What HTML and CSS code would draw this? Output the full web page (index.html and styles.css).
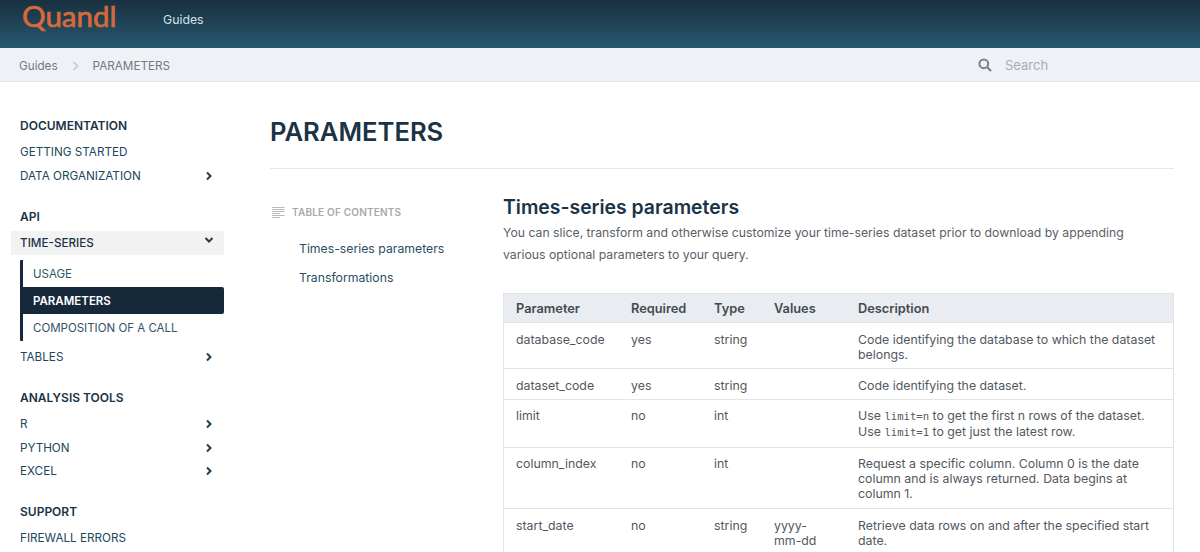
FILE: index.html
```html
<!DOCTYPE html>
<html lang="en">
<head>
<meta charset="utf-8">
<title>Parameters</title>
<link rel="stylesheet" href="styles.css">
</head>
<body>
<header class="topbar">
  <a class="logo">Quandl</a>
  <a class="topnav">Guides</a>
</header>
<div class="crumbs">
  <div class="crumb-list">
    <span>Guides</span>
    <svg class="crumb-sep" width="7" height="10" viewBox="0 0 7 10"><path d="M1.5 1l4 4-4 4" fill="none" stroke="#c4c8cd" stroke-width="1.6"/></svg>
    <span>PARAMETERS</span>
  </div>
  <div class="search">
    <svg width="14" height="14" viewBox="0 0 14 14"><circle cx="5.8" cy="5.8" r="4.4" fill="none" stroke="#7b8083" stroke-width="2"/><path d="M9 9l4 4" stroke="#7b8083" stroke-width="2.2"/></svg>
    <span>Search</span>
  </div>
</div>
<div class="page">
  <nav class="sidebar">
    <section class="nav-group">
      <h4>DOCUMENTATION</h4>
      <a class="nav-row">GETTING STARTED</a>
      <a class="nav-row">DATA ORGANIZATION <svg class="chev" viewBox="0 0 8 10"><path d="M2 1.5L5.5 5 2 8.5" /></svg></a>
    </section>
    <section class="nav-group">
      <h4>API</h4>
      <a class="nav-row open">TIME-SERIES <svg class="chev down" viewBox="0 0 10 8"><path d="M1.5 2L5 5.5 8.5 2" /></svg></a>
      <div class="subnav">
        <a>USAGE</a>
        <a class="active">PARAMETERS</a>
        <a>COMPOSITION OF A CALL</a>
      </div>
      <a class="nav-row">TABLES <svg class="chev" viewBox="0 0 8 10"><path d="M2 1.5L5.5 5 2 8.5" /></svg></a>
    </section>
    <section class="nav-group">
      <h4>ANALYSIS TOOLS</h4>
      <a class="nav-row">R <svg class="chev" viewBox="0 0 8 10"><path d="M2 1.5L5.5 5 2 8.5" /></svg></a>
      <a class="nav-row">PYTHON <svg class="chev" viewBox="0 0 8 10"><path d="M2 1.5L5.5 5 2 8.5" /></svg></a>
      <a class="nav-row">EXCEL <svg class="chev" viewBox="0 0 8 10"><path d="M2 1.5L5.5 5 2 8.5" /></svg></a>
    </section>
    <section class="nav-group">
      <h4>SUPPORT</h4>
      <a class="nav-row">FIREWALL ERRORS</a>
    </section>
  </nav>
  <main class="main">
    <h1>PARAMETERS</h1>
    <div class="columns">
      <aside class="toc">
        <div class="toc-title">
          <svg width="13" height="11" viewBox="0 0 13 11"><path d="M0 .5h12.5M0 2.5h12.5M0 4.5h12.5M0 6.5h8M0 8.5h12.5M0 10.5h8" stroke="#b9bcbf" fill="none"/></svg>
          <span>TABLE OF CONTENTS</span>
        </div>
        <a>Times-series parameters</a>
        <a>Transformations</a>
      </aside>
      <article class="content">
        <h2>Times-series parameters</h2>
        <p>You can slice, transform and otherwise customize your time-series dataset prior to download by appending various optional parameters to your query.</p>
        <table>
          <colgroup><col class="c1"><col class="c2"><col class="c3"><col class="c4"><col class="c5"></colgroup>
          <thead><tr><th>Parameter</th><th>Required</th><th>Type</th><th>Values</th><th>Description</th></tr></thead>
          <tbody>
            <tr><td>database_code</td><td>yes</td><td>string</td><td></td><td>Code identifying the database to which the dataset belongs.</td></tr>
            <tr><td>dataset_code</td><td>yes</td><td>string</td><td></td><td>Code identifying the dataset.</td></tr>
            <tr class="code-row"><td>limit</td><td>no</td><td>int</td><td></td><td>Use <code>limit=n</code> to get the first n rows of the dataset. Use <code>limit=1</code> to get just the latest row.</td></tr>
            <tr><td>column_index</td><td>no</td><td>int</td><td></td><td>Request a specific column. Column 0 is the date column and is always returned. Data begins at column 1.</td></tr>
            <tr><td>start_date</td><td>no</td><td>string</td><td>yyyy-mm-dd</td><td>Retrieve data rows on and after the specified start date.</td></tr>
          </tbody>
        </table>
      </article>
    </div>
  </main>
</div>
</body>
</html>
```
FILE: styles.css
```css
* { box-sizing: border-box; }
html, body { margin: 0; height: 552px; overflow: hidden; }
body { font-family: Inter, "Liberation Sans", sans-serif; color: #1b3345; background: #fff; }

.topbar { height: 48px; display: flex; align-items: center; background: linear-gradient(#18303f, #28586f); }
.logo { width: 163px; padding: 0 0 17px 22px; font-family: Lato, sans-serif; font-size: 29.5px; line-height: 30px; color: #d9683a; -webkit-text-stroke: .7px #d9683a; }
.topnav { padding-bottom: 10px; font-size: 12.3px; color: #d5e0e6; }

.crumbs { height: 34px; padding-top: 1px; display: flex; align-items: center; justify-content: space-between; background: #eef1f6; border-bottom: 1px solid #e3e5e8; font-size: 11.7px; color: #74797f; }
.crumb-list { display: flex; align-items: center; padding: 1px 0 0 19px; }
.crumb-sep { margin: 0 14px 0 14px; }
.search { width: 222px; display: flex; align-items: center; gap: 13px; font-size: 13px; color: #a9adb2; }

.page { display: flex; }
.sidebar { width: 224px; flex: none; padding: 36px 0 0 20px; }
.nav-group { margin-bottom: 21px; }
.nav-group h4 { margin: 0 0 7.5px; font-size: 12px; line-height: 15px; font-weight: 600; color: #1a3345; }
.nav-row { height: 23.5px; display: flex; align-items: center; justify-content: space-between; padding-right: 11px; font-size: 11.7px; color: #21475c; }
.chev { width: 8px; height: 10px; fill: none; stroke: #1f3d52; stroke-width: 2; }
.chev.down { width: 10px; height: 8px; margin: -6px -1px 0 0; }
.nav-row.open { height: 24px; margin: 0 0 0 -9px; padding-left: 9px; background: #f2f2f2; font-weight: 500; color: #1a3345; }
.subnav { margin: 5px 0 0; border-left: 3px solid #16293a; border-radius: 1px; height: 81px; display: flex; flex-direction: column; }
.subnav a { flex: 1; display: flex; align-items: center; padding-left: 10px; font-size: 11.5px; color: #2d5468; }
.subnav a.active { background: #15293b; color: #fff; font-weight: 600; border-radius: 0 2px 2px 0; margin-left: -1px; padding-left: 11px; }
.subnav + .nav-row { margin-top: 4.5px; }

.main { flex: 1; margin-left: 46px; margin-right: 26px; padding-top: 32px; }
h1 { margin: 0; height: 55px; border-bottom: 1px solid #e8e8e8; font-size: 25.6px; line-height: 36px; font-weight: 600; color: #1a3345; }
.columns { display: flex; }
.toc { width: 233px; flex: none; padding-top: 36px; }
.toc-title { display: flex; align-items: center; gap: 7px; margin: 0 0 22px 2px; font-size: 10px; line-height: 14px; font-weight: 600; color: #a5a9ad; letter-spacing: .2px; }
.toc a { display: block; margin: 0 0 13px 29px; font-size: 12.25px; line-height: 16px; color: #2a4e63; }
.content { flex: 1; padding-top: 25px; }
h2 { margin: 0; font-size: 19.4px; line-height: 26px; font-weight: 600; color: #1a3345; }
.content p { margin: 2px 0 27px; padding-right: 30px; font-size: 12.25px; line-height: 22px; color: #5b6066; }
table { width: 100%; table-layout: fixed; border-collapse: collapse; font-size: 12.35px; line-height: 15px; color: #53585e; }
.c1 { width: 114.5px; } .c2 { width: 83px; } .c3 { width: 60px; } .c4 { width: 84px; }
th { height: 29px; padding: 0 13px; text-align: left; background: #e9ecf0; font-size: 12.8px; font-weight: 600; color: #454a50; border: 1px solid #e0e2e5; border-width: 1px 0; }
th:first-child, td:first-child { padding-left: 12px; border-left: 1px solid #e0e2e5; }
th:last-child, td:last-child { border-right: 1px solid #e0e2e5; }
td { padding: 9px 13px 6px; vertical-align: top; border-bottom: 1px solid #e3e4e6; }
.code-row td { padding-top: 7.5px; padding-bottom: 7.5px; line-height: 16px; }
.code-row + tr td { padding-top: 8px; padding-bottom: 7px; }
code { font-family: "DejaVu Sans Mono", monospace; font-size: 10.6px; line-height: 1; }
```
